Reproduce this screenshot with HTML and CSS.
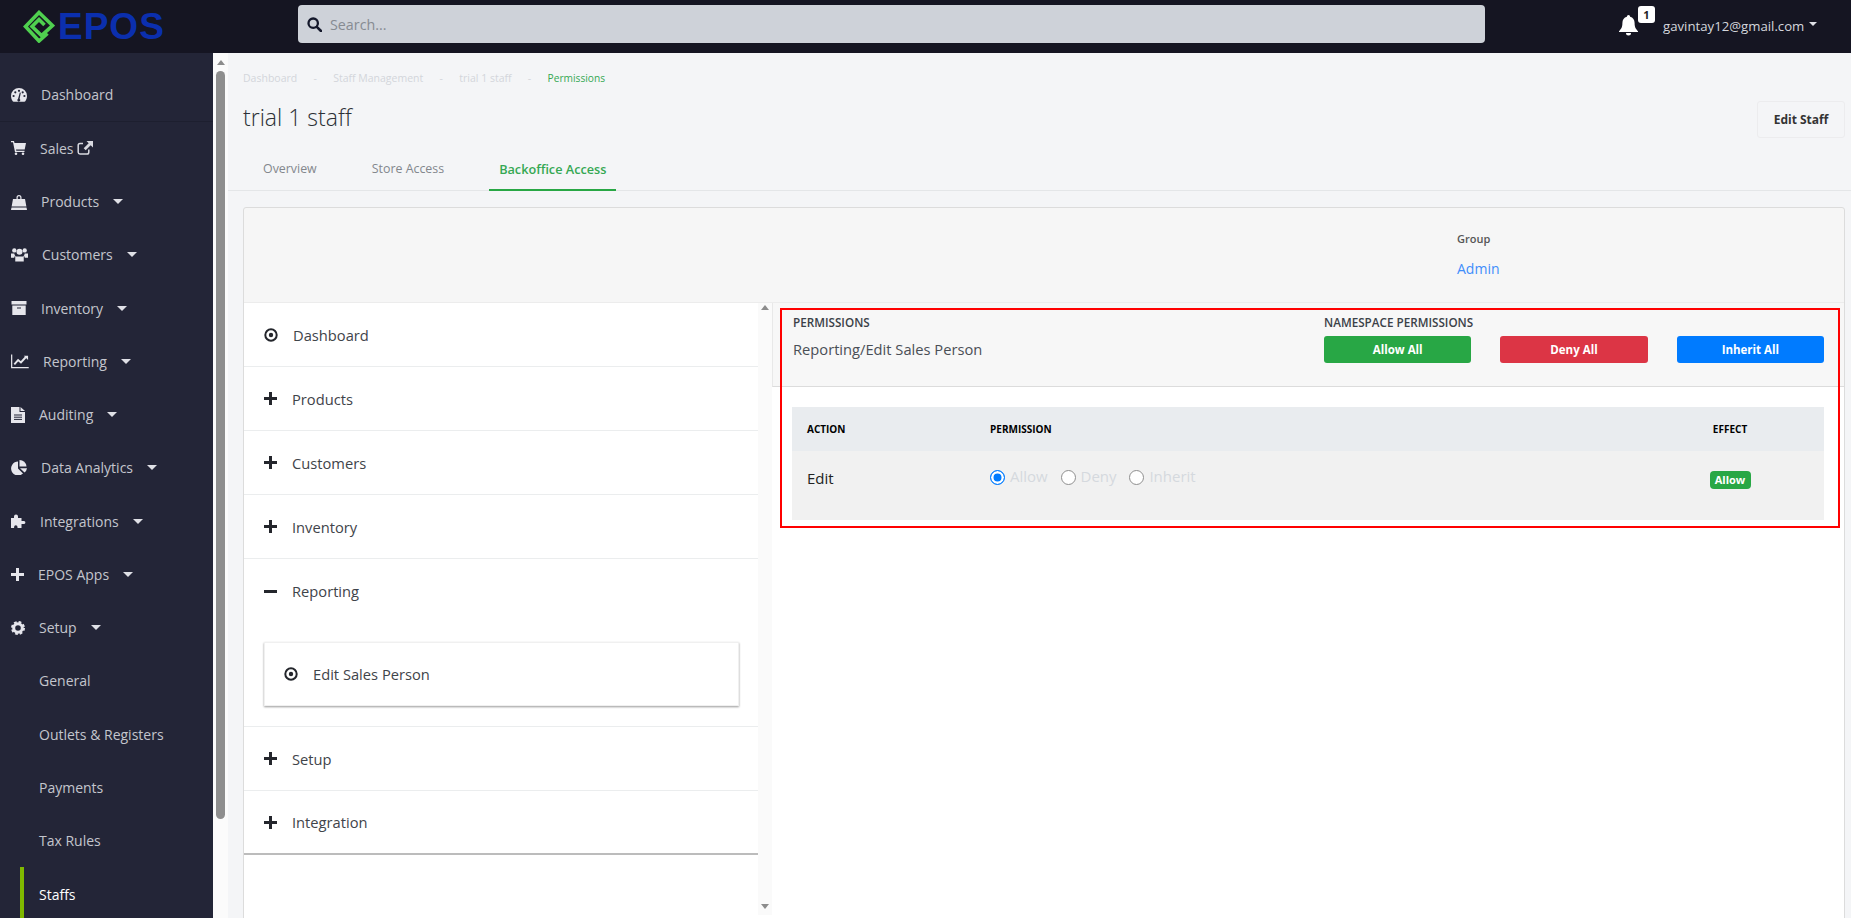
FILE: index.html
```html
<!DOCTYPE html>
<html lang="en">
<head>
<meta charset="utf-8">
<title>trial 1 staff - Permissions</title>
<link rel="stylesheet" href="styles.css">
</head>
<body>
<svg class="defs" width="0" height="0" aria-hidden="true">
  <symbol id="i-plus" viewBox="0 0 13 13"><path d="M5 0h3v5h5v3H8v5H5V8H0V5h5z"/></symbol>
  <symbol id="i-target" viewBox="0 0 14 14"><circle cx="7" cy="7" r="5.700" fill="none" stroke="currentColor" stroke-width="2"/><circle cx="7" cy="7" r="2.200"/></symbol>
</svg>
<div class="app">
  <header class="topbar">
    <div class="logo">
      <svg width="32" height="33" viewBox="0 0 32 33"><path d="M24.500 23.500L16 31L2.500 16.500L16 2.500L29.500 15.500L18.500 25.500L9 16.500L16 9.500L21.500 15" fill="none" stroke="#4fd04f" stroke-width="3.600"/></svg>
      <span class="logo-text">EPOS</span>
    </div>
    <div class="search">
      <svg width="15" height="15" viewBox="0 0 15 15"><circle cx="6.200" cy="6.200" r="4.700" fill="none" stroke="#14182b" stroke-width="2.300"/><path d="M9.800 9.800L14 14" stroke="#14182b" stroke-width="2.600" stroke-linecap="round"/></svg>
      <span>Search...</span>
    </div>
    <div class="top-right">
      <div class="bell">
        <svg width="19" height="21" viewBox="0 0 19 21"><path d="M9.500 0a1.600 1.600 0 0 1 1.600 1.700C14 2.400 15.600 4.700 15.600 8c0 4.500 1.300 6 3.400 8.200V17H0v-.8C2.100 14 3.400 12.500 3.400 8c0-3.300 1.600-5.600 4.500-6.300A1.600 1.600 0 0 1 9.500 0zM7 18h5a2.500 2.500 0 0 1-5 0z" fill="#fff"/></svg>
        <span class="bell-badge">1</span>
      </div>
      <span class="email">gavintay12@gmail.com</span>
      <i class="caret"></i>
    </div>
  </header>
  <div class="below">
    <nav class="sidebar">
      <a class="nav-item nav-first"><svg width="16" height="14" viewBox="0 0 16 14"><path d="M8 0a8 8 0 0 1 8 8c0 2-.6 3.700-1.700 5.200-.2.300-.5.500-.9.500H2.600c-.4 0-.7-.2-.9-.5A8.500 8.500 0 0 1 0 8a8 8 0 0 1 8-8z" fill="#e6e6ec"/><g fill="#232537"><circle cx="8" cy="2.800" r="1.100"/><circle cx="4.300" cy="4.300" r="1.100"/><circle cx="11.700" cy="4.300" r="1.100"/><circle cx="2.600" cy="8" r="1.100"/><circle cx="13.400" cy="8" r="1.100"/><path d="M7 11l1.800-6.500 1 .3L8.600 11a1.400 1.400 0 1 1-1.600 0z"/></g></svg><span>Dashboard</span></a>
      <a class="nav-item"><svg width="15" height="14" viewBox="0 0 15 14"><path d="M0 0h3l.5 2H15l-1.300 6.500H5l.3 1.300h8.200V11H4L2 1.300H0z" fill="#e6e6ec"/><circle cx="5" cy="12.700" r="1.300" fill="#e6e6ec"/><circle cx="12" cy="12.700" r="1.300" fill="#e6e6ec"/></svg><span class="sales">Sales<svg width="16" height="14" viewBox="0 0 16 14"><path d="M6 2.500H3A1.800 1.800 0 0 0 1.200 4.300v7A1.800 1.800 0 0 0 3 13h7a1.800 1.800 0 0 0 1.800-1.800V8.500" fill="none" stroke="#d8d9e0" stroke-width="1.500"/><path d="M9.500 0H16v6.500l-2.300-2.300-5 5-2-2 5-5z" fill="#d8d9e0"/></svg></span></a>
      <a class="nav-item has-caret"><svg width="16" height="16" viewBox="0 0 16 16"><path fill-rule="evenodd" d="M2 5h3.500V3.500a2.500 2.500 0 0 1 5 0V5H14l2 11H0zM6.700 5h2.600V3.500a1.300 1.300 0 0 0-2.600 0z" fill="#e6e6ec"/><path d="M0 13h16" stroke="#232537"/></svg><span>Products</span><i class="caret"></i></a>
      <a class="nav-item has-caret"><svg width="17" height="15" viewBox="0 0 18 15"><g fill="#e6e6ec"><circle cx="3.500" cy="3.200" r="2.300"/><circle cx="14.500" cy="3.200" r="2.300"/><circle cx="9" cy="4.500" r="3.200"/><path d="M0 6.500h3.500a4.500 4.500 0 0 0 1.500 3H3.500V11H0zM18 6.500h-3.500a4.500 4.500 0 0 1-1.500 3h1.500V11H18zM4.500 9.500h9V15h-9z"/></g></svg><span>Customers</span><i class="caret"></i></a>
      <a class="nav-item has-caret"><svg width="16" height="14" viewBox="0 0 15 14"><path d="M0 0h15v3.500H0zM.8 4.500h13.400V14H.8z" fill="#e6e6ec"/><path d="M5.500 6.500h4v1h-4z" fill="#232537"/></svg><span>Inventory</span><i class="caret"></i></a>
      <a class="nav-item has-caret"><svg width="18" height="15" viewBox="0 0 19 15"><path d="M.7 0v14h18" fill="none" stroke="#e6e6ec" stroke-width="1.300"/><path d="M3.500 10.500l4-4.500 3 2.500 5.500-6" fill="none" stroke="#e6e6ec" stroke-width="2"/><path d="M13.500 1.500H18V6z" fill="#e6e6ec"/></svg><span>Reporting</span><i class="caret"></i></a>
      <a class="nav-item has-caret"><svg width="14" height="16" viewBox="0 0 14 16"><path d="M0 0h8.500v5H14v11H0z" fill="#e6e6ec"/><path d="M9.500 0L14 4H9.500z" fill="#e6e6ec"/><path d="M3 8h8M3 10.200h8M3 12.400h8" stroke="#232537"/></svg><span>Auditing</span><i class="caret"></i></a>
      <a class="nav-item has-caret"><svg width="16" height="15" viewBox="0 0 16 15"><path d="M7 1.500V8.500l5 5A7 7 0 1 1 7 1.500z" fill="#e6e6ec"/><path d="M8.500 0A7 7 0 0 1 15.500 6.500H8.500z" fill="#e6e6ec"/><path d="M9 8.200h7A7 7 0 0 1 13.500 12.600z" fill="#e6e6ec"/></svg><span>Data Analytics</span><i class="caret"></i></a>
      <a class="nav-item has-caret"><svg width="15" height="14" viewBox="0 0 15 14"><path d="M5 .5a2 2 0 0 1 2 2V4h3.500v3h1.700a1.600 1.600 0 1 1 0 3h-1.700v4h-4v-1a1.700 1.700 0 0 0-3.400 0v1H0V4h3V2.500a2 2 0 0 1 2-2z" fill="#e6e6ec"/></svg><span>Integrations</span><i class="caret"></i></a>
      <a class="nav-item has-caret"><svg class="nav-plus" width="13" height="13"><use href="#i-plus"/></svg><span>EPOS Apps</span><i class="caret"></i></a>
      <a class="nav-item has-caret"><svg width="14" height="14" viewBox="0 0 14 14"><circle cx="7" cy="7" r="4.300" fill="none" stroke="#e6e6ec" stroke-width="3"/><circle cx="7" cy="7" r="6" fill="none" stroke="#e6e6ec" stroke-width="2" stroke-dasharray="2.700 2"/></svg><span>Setup</span><i class="caret"></i></a>
      <a class="nav-item nav-sub">General</a>
      <a class="nav-item nav-sub">Outlets &amp; Registers</a>
      <a class="nav-item nav-sub">Payments</a>
      <a class="nav-item nav-sub">Tax Rules</a>
      <a class="nav-item nav-sub nav-active">Staffs</a>
    </nav>
    <div class="page-scroll">
      <i class="arrow-up"></i>
      <i class="thumb"></i>
    </div>
    <main class="main">
      <div class="page-head">
        <div>
          <ol class="crumbs">
            <li>Dashboard</li><li class="sep">-</li><li>Staff Management</li><li class="sep">-</li><li>trial 1 staff</li><li class="sep">-</li><li class="crumb-now">Permissions</li>
          </ol>
          <h1 class="title">trial 1 staff</h1>
        </div>
        <button class="edit-btn">Edit Staff</button>
      </div>
      <div class="tabs">
        <a class="tab">Overview</a>
        <a class="tab">Store Access</a>
        <a class="tab tab-active">Backoffice Access</a>
      </div>
      <section class="card">
        <div class="card-top">
          <div class="group">
            <div class="group-label">Group</div>
            <a class="group-link">Admin</a>
          </div>
        </div>
        <div class="panels">
          <div class="tree">
            <div class="tree-row tree-leaf"><svg class="ic-target" width="14" height="14"><use href="#i-target"/></svg><span>Dashboard</span></div>
            <div class="tree-row"><svg class="ic" width="13" height="13"><use href="#i-plus"/></svg><span>Products</span></div>
            <div class="tree-row"><svg class="ic" width="13" height="13"><use href="#i-plus"/></svg><span>Customers</span></div>
            <div class="tree-row"><svg class="ic" width="13" height="13"><use href="#i-plus"/></svg><span>Inventory</span></div>
            <div class="tree-open">
              <div class="tree-row tree-head"><svg class="ic" width="13" height="13" viewBox="0 0 13 13"><path d="M0 5h13v3H0z"/></svg><span>Reporting</span></div>
              <div class="tree-card"><svg class="ic-target" width="14" height="14"><use href="#i-target"/></svg><span>Edit Sales Person</span></div>
            </div>
            <div class="tree-row"><svg class="ic" width="13" height="13"><use href="#i-plus"/></svg><span>Setup</span></div>
            <div class="tree-row tree-last"><svg class="ic" width="13" height="13"><use href="#i-plus"/></svg><span>Integration</span></div>
          </div>
          <div class="tree-scroll">
            <i class="arrow-up"></i>
            <i class="arrow-down"></i>
          </div>
          <div class="detail">
            <div class="detail-head">
              <div class="detail-title">
                <div class="caps">PERMISSIONS</div>
                <div class="detail-path">Reporting/Edit Sales Person</div>
              </div>
              <div class="namespace">
                <div class="caps">NAMESPACE PERMISSIONS</div>
                <div class="btn-row">
                  <button class="btn btn-green">Allow All</button>
                  <button class="btn btn-red">Deny All</button>
                  <button class="btn btn-blue">Inherit All</button>
                </div>
              </div>
            </div>
            <table class="perm-table">
              <thead>
                <tr><th class="col-action">ACTION</th><th class="col-perm">PERMISSION</th><th class="col-effect">EFFECT</th></tr>
              </thead>
              <tbody>
                <tr>
                  <td class="cell-action">Edit</td>
                  <td class="cell-perm">
                    <span class="radio radio-on"></span><span class="radio-text">Allow</span>
                    <span class="radio"></span><span class="radio-text">Deny</span>
                    <span class="radio"></span><span class="radio-text">Inherit</span>
                  </td>
                  <td class="cell-effect"><span class="badge">Allow</span></td>
                </tr>
              </tbody>
            </table>
            <div class="annotation"></div>
          </div>
        </div>
      </section>
    </main>
  </div>
</div>
</body>
</html>
```

FILE: styles.css
```css
* { box-sizing: border-box; }
html, body { margin: 0; height: 100%; overflow: hidden; }
body { font-family: "Open Sans", "Noto Sans", sans-serif; font-size: 14.700px; color: #3f444a; background: #f4f5f7; }
.defs { position: absolute; }
.app { display: flex; flex-direction: column; height: 918px; }

/* top bar */
.topbar { height: 53px; flex: none; display: flex; align-items: center; background: #151522; }
.logo { width: 298px; flex: none; display: flex; align-items: center; padding-left: 23px; gap: 3px; height: 100%; }
.logo-text { font-family: "Liberation Sans", sans-serif; font-weight: 700; font-size: 37px; letter-spacing: 1px; color: #0b2fae; line-height: 1; }
.search { width: 1187px; height: 38px; margin-top: -5px; flex: none; display: flex; align-items: center; gap: 8px; padding-left: 9px; background: #ced2d9; border-radius: 4px; color: #868b92; font-size: 14.300px; }
.top-right { flex: 1; display: flex; align-items: center; padding-left: 134px; margin-top: -2px; }
.bell { position: relative; width: 44px; height: 21px; }
.bell-badge { position: absolute; left: 19px; top: -9px; width: 17px; height: 17px; border-radius: 3px; background: #fff; color: #222; font-size: 11px; font-weight: 700; line-height: 17px; text-align: center; }
.email { color: #d4d6dc; font-size: 13.200px; }
.caret { display: inline-block; width: 0; height: 0; margin-left: 5px; border-left: 5px solid transparent; border-right: 5px solid transparent; border-top: 5px solid #dfe0e6; }
.top-right .caret { border-width: 4px 4px 0; margin-top: -4px; }

.below { flex: 1; display: flex; min-height: 0; }

/* sidebar */
.sidebar { width: 213px; flex: none; padding-top: 15.400px; background: #232537; overflow: hidden; }
.nav-item { height: 53.270px; display: flex; align-items: center; gap: 14px; padding-left: 11px; color: #c3c5cd; font-size: 14px; }
.nav-item svg { flex: none; }
.nav-first { border-bottom: 1px solid #1d1f2f; }
.nav-plus { fill: #e6e6ec; }
.has-caret .caret { margin-left: 0; }
.sales { display: inline-flex; align-items: center; gap: 3px; }
.nav-sub { padding-left: 39px; }
.nav-active { margin-left: 20px; padding-left: 15px; border-left: 4px solid #7fb800; color: #fff; }

.page-scroll { width: 15px; flex: none; display: flex; flex-direction: column; align-items: center; padding-top: 7px; background: #fbfbfb; }
.thumb { width: 9px; height: 748px; margin-top: 6px; border-radius: 5px; background: #8e8e8e; }
.arrow-up, .arrow-down { display: block; width: 0; height: 0; border-left: 4px solid transparent; border-right: 4px solid transparent; }
.arrow-up { border-bottom: 5px solid #8c8c8c; }
.arrow-down { border-top: 5px solid #8c8c8c; }

/* main */
.main { flex: 1; min-width: 0; overflow: hidden; }
.page-head { display: flex; justify-content: space-between; align-items: flex-start; padding: 18px 6px 0 15px; height: 100px; }
.crumbs { display: flex; margin: 0; padding: 0; list-style: none; font-size: 10.500px; line-height: 14px; color: #d3d6db; }
.crumbs .sep { width: 36px; text-align: center; }
.crumb-now { color: #35a853; font-size: 10.200px; }
.title { margin: 16px 0 0; font-size: 23px; font-weight: 300; line-height: 33px; color: #2b3036; }
.edit-btn { margin-top: 30px; width: 88px; height: 37px; padding: 0; border: 1px solid #ececee; border-radius: 3px; background: transparent; font: 700 12px "Open Sans", sans-serif; color: #333; }
.tabs { display: flex; gap: 35px; height: 38px; padding-left: 25px; border-bottom: 1px solid #e4e6e8; }
.tab { padding: 0 10px; height: 38px; line-height: 32px; font-size: 12.400px; color: #83878d; }
.tab-active { font-size: 12.700px; font-weight: 600; color: #35a853; border-bottom: 2px solid #28a745; }

.card { margin: 16px 6px 0 15px; border: 1px solid #dcdcdc; border-radius: 3px; background: #f6f6f6; }
.card-top { height: 94px; display: flex; justify-content: flex-end; }
.group { width: 387px; padding-top: 23px; }
.group-label { font-size: 11px; font-weight: 600; line-height: 16px; color: #555; }
.group-link { display: block; margin-top: 12px; color: #3f8dfb; font-size: 14px; line-height: 20px; }

.panels { display: flex; height: 700px; background: #fff; border-top: 1px solid #ececec; }
.tree { width: 514px; flex: none; }
.tree-row { height: 64px; display: flex; align-items: center; gap: 15px; padding-left: 20px; border-bottom: 1px solid #ebedee; }
.ic { fill: #24262c; flex: none; }
.ic-target { color: #24262c; fill: #24262c; flex: none; }
.tree-open { padding-bottom: 20px; border-bottom: 1px solid #ebedee; }
.tree-head { border-bottom: 0; height: 64px; margin-bottom: 19px; }
.tree-card { margin: 0 19px 0 20px; height: 64px; display: flex; align-items: center; gap: 15px; padding-left: 19px; border: 1px solid #f0f0f0; box-shadow: 0 1px 2px rgba(0, 0, 0, .4); }
.tree-last { border-bottom: 2px solid #bcbcbc; }
.tree-scroll { width: 14px; flex: none; display: flex; flex-direction: column; align-items: center; justify-content: space-between; height: 612px; padding: 2px 0 6px; background: #fafafa; }

.detail { position: relative; flex: 1; min-width: 0; }
.detail-head { height: 84px; display: flex; padding: 11px 20px 0; background: #f7f7f7; border-left: 1px solid #e8e8e8; border-bottom: 1px solid #dcdcdc; }
.detail-title { width: 531px; flex: none; }
.caps { font-size: 11.700px; font-weight: 600; line-height: 16px; color: #3b4148; }
.detail-path { margin-top: 9px; font-size: 14.700px; line-height: 20px; color: #4a4f56; }
.namespace { flex: 1; }
.btn-row { display: flex; gap: 29px; margin-top: 6px; }
.btn { flex: 1; height: 27px; padding: 0; border: 0; border-radius: 3px; color: #fff; font: 700 11.500px "Open Sans", sans-serif; }
.btn-green { background: #28a745; }
.btn-red { background: #dc3545; }
.btn-blue { background: #007bff; }

.perm-table { width: 1032px; margin: 20px 0 0 20px; border-collapse: collapse; table-layout: fixed; }
.perm-table th { height: 44px; padding: 0 0 0 15px; background: #e9ecef; font-size: 10px; font-weight: 700; color: #000; text-align: left; }
.col-action { width: 183px; }
.col-effect { width: 126px; }
.perm-table th.col-effect, .cell-effect { padding-left: 0; padding-right: 62px; text-align: center; }
.perm-table td { height: 69px; vertical-align: top; background: #f1f1f1; }
.cell-action { padding: 17px 0 0 15px; font-size: 15px; line-height: 20px; color: #222; }
.cell-perm { padding: 15px 0 0 15px; line-height: 20px; white-space: nowrap; }
.cell-effect { padding-top: 17px; }
.radio { display: inline-block; width: 15px; height: 15px; margin-right: 5px; vertical-align: -3px; border: 1px solid #8f8f8f; border-radius: 50%; background: #fff; }
.radio-on { border: 1px solid #007bff; background: #007bff; box-shadow: inset 0 0 0 2.500px #fff; }
.radio-text { margin-right: 9px; color: #d5d9de; font-size: 15px; }
.badge { display: inline-block; width: 41px; height: 18px; border-radius: 4px; background: #28a745; color: #fff; font-size: 11px; font-weight: 700; line-height: 18px; text-align: center; }
.annotation { position: absolute; left: 8px; top: 5px; right: 4px; height: 220px; border: 2px solid #f00; pointer-events: none; }
```
